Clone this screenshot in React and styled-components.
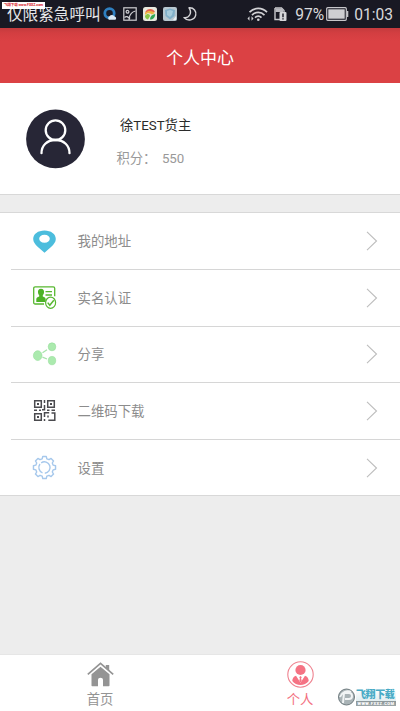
import React from "react";
import styled, { createGlobalStyle } from "styled-components";

const Global = createGlobalStyle`
  * { box-sizing: border-box; }
  body { margin: 0; background: #ededed; font-family: Roboto, "Noto Sans CJK SC", sans-serif; }
  svg { display: block; flex: none; overflow: visible; }
`;

const Screen = styled.div`
  width: 400px;
  height: 711px;
  display: flex;
  flex-direction: column;
  background: #ededed;
  overflow: hidden;
  position: relative;
`;

const StatusBar = styled.header`
  height: 28px;
  flex: none;
  display: flex;
  align-items: center;
  padding: 0 7px 0 7px;
  background: #191923;
  color: #d9d9dc;
`;

const Carrier = styled.span`
  width: 96px;
  padding-top: 2px;
  font-size: 15.6px;
  line-height: 28px;
  white-space: nowrap;
  color: #e6e6e8;
`;

const NoticeIcons = styled.div`
  display: flex;
  gap: 6px;
  flex: 1;
`;

const StatusText = styled.span`
  font-size: 15.6px;
  line-height: 28px;
  margin-left: ${(p) => p.$left}px;
  padding-top: 1px;
`;

const SimWrap = styled.div`
  margin-left: 6px;
`;

const BatteryWrap = styled.div`
  margin-left: 2px;
`;

const SourceTag = styled.div`
  position: absolute;
  left: 2px;
  top: 2px;
  width: 43px;
  height: 7px;
  background: #fff;
  color: #d8222a;
  font-weight: 700;
  white-space: nowrap;
`;

const SourceText = styled.span`
  display: block;
  width: 107px;
  font-size: 9px;
  line-height: 17px;
  letter-spacing: -0.2px;
  text-align: center;
  transform: scale(0.4);
  transform-origin: 0 0;
`;

const TitleBar = styled.div`
  height: 55px;
  flex: none;
  display: flex;
  align-items: center;
  justify-content: center;
  padding-top: 1px;
  background: linear-gradient(#c43a3d 0, #d33e41 5px, #db4144 13px);
  color: #fff;
  font-size: 17px;
`;

const Profile = styled.section`
  height: 112px;
  flex: none;
  display: flex;
  background: #fff;
  border-bottom: 1px solid #d8d8d8;
  padding: 26px 0 0 26px;
`;

const ProfileInfo = styled.div`
  display: flex;
  flex-direction: column;
  padding: 7px 0 0 31.500px;
`;

const UserName = styled.div`
  font-size: 13.3px;
  line-height: 20px;
  padding-left: 3.500px;
  color: #2b2b2b;
`;

const Points = styled.div`
  display: flex;
  gap: 5.500px;
  margin-top: 13px;
  font-size: 13.3px;
  line-height: 20px;
  color: #999;
`;

const Menu = styled.ul`
  list-style: none;
  margin: 17px 0 0;
  padding: 0;
  flex: none;
  background: #fff;
  border-top: 1px solid #d8d8d8;
  border-bottom: 1px solid #d8d8d8;
`;

const MenuRow = styled.li`
  height: 56.6px;
  margin-left: 11px;
  display: flex;
  align-items: center;
  padding: 0 22px 0 22px;
  &:first-child { height: 56px; }
  & + & { border-top: 1px solid #d6d6d6; }
`;

const MenuLabel = styled.span`
  flex: 1;
  margin-left: 21.500px;
  padding-top: 2px;
  font-size: 13.4px;
  line-height: 20px;
  color: #8c8c8c;
`;

const TabBar = styled.nav`
  height: 57px;
  flex: none;
  margin-top: auto;
  display: flex;
  background: #fff;
  border-top: 1px solid #e6e6e6;
`;

const Tab = styled.div`
  flex: 1;
  display: flex;
  flex-direction: column;
  align-items: center;
  padding-top: 6px;
  gap: 2px;
  font-size: 13.3px;
  line-height: 20px;
  color: ${(p) => (p.$active ? "#f36f80" : "#949494")};
`;

const Watermark = styled.div`
  position: absolute;
  left: 338px;
  top: 688px;
  display: flex;
  align-items: center;
`;

const WatermarkText = styled.div`
  margin-left: 1px;
  width: 40px;
  height: 17px;
  background: linear-gradient(#fff 0, #e2eef1 68%, #8b9699 69%, #9ca5a7 100%);
  color: #48abc6;
  font-size: 10px;
  line-height: 12px;
  font-weight: 900;
  letter-spacing: -0.4px;
  white-space: nowrap;
`;

const WatermarkUrl = styled.span`
  display: block;
  width: 80px;
  font-size: 8px;
  line-height: 10px;
  letter-spacing: 1px;
  color: #fff;
  text-align: center;
  transform: scale(0.5);
  transform-origin: 0 0;
`;

const BrowserIcon = () => (
  <svg width="14" height="14" viewBox="0 0 14 14">
    <circle cx="6.5" cy="6.3" r="4.7" fill="none" stroke="#2e7fc0" strokeWidth="2.8" />
    <path d="M6 12.8a2 2 0 0 1 .5-3.5 3 3 0 0 1 5.1.1 1.8 1.8 0 0 1 .5 3.4z" fill="#dceaf4" />
  </svg>
);

const PictureIcon = () => (
  <svg width="14" height="14" viewBox="0 0 14 14" fill="none" stroke="#cfcfd3" strokeWidth="1.2">
    <rect x=".8" y=".8" width="12.4" height="12.4" />
    <circle cx="4.5" cy="4.8" r="1.4" />
    <path d="M1.5 10.5c2-2 3.500-.4 4.500.6C7 6.800 9 4.800 12.500 4M6 13c.2-1 .3-1.300 1-2.500" />
  </svg>
);

const ColorfulIcon = () => (
  <svg width="14" height="14" viewBox="0 0 14 14">
    <rect width="14" height="14" rx="2.500" fill="#e8e9df" />
    <path d="M2 5.500C4 1 10 1 12 5L7 6z" fill="#e6624d" />
    <path d="M2 6c3-3 7-2.500 10 0L9 7.500C6 5.500 4 6 2 8z" fill="#eeb844" />
    <path d="M2 9c2-3 5-2 5 0L5 12.500C3 12 2 11 2 9z" fill="#8ac646" />
    <path d="M7 12.500c0-3 2-5 5.200-5.500 0 3.500-2 5.500-5.200 5.500z" fill="#30a653" />
  </svg>
);

const CleanerIcon = () => (
  <svg width="14" height="14" viewBox="0 0 14 14">
    <rect width="14" height="14" rx="2" fill="#b8c7d0" />
    <path d="M2 3l5-1.500L12 3l-.5 6L7 12.500 2.500 9z" fill="#82b1cb" />
    <path d="M4 4l3-1 3 1-1 4-2 2-3-2z" fill="#a8ccdd" />
    <path d="M10 13l3-4v4z" fill="#eef2f4" />
  </svg>
);

const MoonIcon = () => (
  <svg width="14" height="14" viewBox="0 0 14 14">
    <path d="M6 .8c5-.4 7.600 3.800 6.700 7.400-1.200 5-8 6.600-11.700 2.400C6 11.500 9.500 6 6 .8z" fill="none" stroke="#d4d4d7" strokeWidth="1.400" strokeLinejoin="round" />
  </svg>
);

const WifiIcon = () => (
  <svg width="20" height="15" viewBox="0 0 20 15" fill="none" stroke="#d2d2d5" strokeWidth="1.700">
    <path d="M1.500 5.200c5-5 12.500-5 17.500 0M4 8.100c3.600-3.600 9-3.600 12.500 0M7 10.700c2-2 4.600-2 6.500 0" />
    <circle cx="10.300" cy="12.700" r="1.300" fill="#d2d2d5" stroke="none" />
    <path d="M-.5 11.500l2-2.200v4.400zM5.500 11.500l-2-2.200v4.400z" fill="#d2d2d5" stroke="none" />
  </svg>
);

const SimIcon = () => (
  <svg width="13" height="14" viewBox="0 0 13 14">
    <path d="M1 1h6.500L10 3.500v2M6 12.500H1V1" fill="none" stroke="#c9c9cd" strokeWidth="1.400" />
    <path d="M1.500 1.500h6L9 3v2H1.500z" fill="#bcbcc1" />
    <rect x="5.500" y="5" width="7" height="9" rx="1" fill="#d6d6d9" />
    <path d="M9 6.500v3.700M9 11.300v1.300" stroke="#191923" strokeWidth="1.400" />
  </svg>
);

const BatteryIcon = () => (
  <svg width="23" height="14" viewBox="0 0 23 14">
    <rect x=".7" y=".7" width="19.600" height="12.600" rx="1" fill="none" stroke="#c6c6ca" strokeWidth="1.200" />
    <rect x="2.300" y="2.300" width="16.400" height="9.400" fill="#cfcfd2" />
    <path d="M21.500 4v6" stroke="#c6c6ca" strokeWidth="1.600" />
  </svg>
);

const Avatar = () => (
  <svg width="59" height="60" viewBox="0 0 59 60">
    <circle cx="29.500" cy="29.900" r="29.400" fill="#272636" />
    <g fill="none" stroke="#fff" strokeWidth="2.300" strokeLinecap="round">
      <circle cx="29.500" cy="21.200" r="9.800" />
      <path d="M15.500 44.200c0-7.500 5.500-13.200 14-13.200s14 5.700 14 13.200" />
    </g>
  </svg>
);

const PinIcon = () => (
  <svg width="23" height="23" viewBox="0 0 23 23">
    <path fillRule="evenodd" fill="#4cbddd" d="M11.500.5C5 .5.200 4 .200 9c0 3 2 5.300 4.400 7.700l6.900 6 6.800-6c2.500-2.400 4.500-4.700 4.500-7.700 0-5-4.800-8.500-11.300-8.500zm0 4.200c3.300 0 5.300 1.700 5.300 4s-2 4-5.300 4-5.300-1.700-5.300-4 2-4 5.300-4z" />
  </svg>
);

const IdIcon = () => (
  <svg width="23" height="23" viewBox="0 0 23 23" fill="none" stroke="#58b831" strokeWidth="1.300">
    <path d="M11 18H2.200Q.7 18 .7 16.500V2.300Q.7.800 2.200.800h18Q21.700.800 21.700 2.300v8" />
    <path d="M8 2.800c2.400 0 3.300 1.800 3 3.800-.2 1.400-.8 2.200-1.200 2.700v1.300c1.700.6 2.900 1.300 2.900 2.700v2.700H3.300v-2.700c0-1.400 1.200-2.100 2.900-2.700V9.300c-.5-.5-1-1.300-1.200-2.700C4.700 4.600 5.600 2.800 8 2.800z" fill="#4db327" stroke="none" />
    <path d="M12.500 5.700H19M12.500 9H19" />
    <ellipse cx="17.600" cy="16.700" rx="5" ry="5.600" fill="#fff" strokeWidth="1.200" />
    <path d="M14.700 16.600l2.100 2.700 4-5" strokeWidth="1.500" />
  </svg>
);

const ShareIcon = () => (
  <svg width="23" height="23" viewBox="0 0 23 23">
    <path d="M9.500 9.700l4.500-3M9.500 14.200l4.500 1.800" stroke="#a7e4ab" strokeWidth="1.300" />
    <g fill="#abeaae" stroke="#96dd9b" strokeWidth=".6">
      <ellipse cx="4.700" cy="12.600" rx="4.300" ry="4.900" />
      <ellipse cx="19" cy="3.800" rx="3.800" ry="4" />
      <ellipse cx="19" cy="17.600" rx="3.700" ry="4.200" />
    </g>
  </svg>
);

const QrIcon = () => (
  <svg width="23" height="23" viewBox="0 0 23 23" fill="none" stroke="#4a4a4e" strokeWidth="1.500">
    <path d="M1.700 1.700h6.600v6.600H1.700zM14.700 1.700h6.600v6.600h-6.600zM1.700 14.700h6.600v6.600H1.700z" />
    <path d="M4 4h2v2H4zM17 4h2v2h-2zM4 17h2v2H4z" fill="#4a4a4e" stroke="none" />
    <path d="M11.500 1v3M11.500 6v4.700H9M1 11.200h3M6 11.200h2M14 11.200h2.500M18.500 11.200H22M11.500 18v-4.200h4.700M18.500 14h3.300v7.300h-6.500M11.500 20v2M15 16.500v2" />
  </svg>
);

const gearPath = (() => {
  const points = [];
  for (let i = 0; i < 8; i++) {
    [[-15, 9], [-9, 11.2], [9, 11.2], [15, 9]].forEach(([offset, radius]) => {
      const angle = ((i * 45 + offset) * Math.PI) / 180;
      points.push(`${(11.5 + radius * Math.sin(angle)).toFixed(2)} ${(11.5 - radius * Math.cos(angle)).toFixed(2)}`);
    });
  }
  return `M${points.join("L")}Z`;
})();

const GearIcon = () => (
  <svg width="23" height="23" viewBox="0 0 23 23" fill="none" stroke="#a6c8ec" strokeWidth="1.400" strokeLinejoin="round">
    <path d={gearPath} />
    <path d="M9.500 16.800A5.700 5.700 0 0 1 7 8M8.200 6.800A5.700 5.700 0 1 1 11.800 17.200" />
  </svg>
);

const Chevron = () => (
  <svg width="12" height="20" viewBox="0 0 12 20">
    <path d="M1 .8L10.500 10 1 19.200" fill="none" stroke="#bdbdbd" strokeWidth="1.100" />
  </svg>
);

const HomeIcon = () => (
  <svg width="27" height="27" viewBox="0 0 27 27">
    <path d="M.8 13.300L13.500 2.300l12.700 11" fill="none" stroke="#949494" strokeWidth="1.700" />
    <path d="M18.800 4h3.400v6l-3.400-3zM13.500 5.700L22.500 13.300v11.200q0 .8-.8.800H16v-6.600q0-1.900-2.500-1.900T11 18.700v6.600H5.300q-.8 0-.8-.8V13.300z" fill="#949494" />
  </svg>
);

const PersonIcon = () => (
  <svg width="27" height="27" viewBox="0 0 27 27">
    <circle cx="13.500" cy="13.500" r="12.700" fill="none" stroke="#ef8390" strokeWidth="1.100" />
    <circle cx="13.500" cy="9" r="5.100" fill="#f57384" />
    <path d="M9 14.800l4.500 7 4.500-7c2.500.8 3.700 3 3.700 5.300-2 2.700-5 4-8.200 4s-6.200-1.300-8.200-4c0-2.300 1.200-4.500 3.700-5.300z" fill="#f57384" />
    <path d="M13.500 15l1.300 1.200-.7 1 .6 2.800-1.200 1.500-1.200-1.500.6-2.800-.7-1z" fill="#f57384" />
  </svg>
);

const BadgeIcon = () => (
  <svg width="17" height="18" viewBox="0 0 17 18">
    <circle cx="8.500" cy="9" r="8" fill="#a9b3b6" stroke="#707c80" />
    <path d="M5 15l1-10h5a3 3 0 0 1 0 6H7M2 9c2-5 7-7 11-5" fill="none" stroke="#f1f4f5" strokeWidth="2" />
  </svg>
);

const menuItems = [
  { label: "我的地址", Icon: PinIcon },
  { label: "实名认证", Icon: IdIcon },
  { label: "分享", Icon: ShareIcon },
  { label: "二维码下载", Icon: QrIcon },
  { label: "设置", Icon: GearIcon },
];

export default function App() {
  return (
    <Screen>
      <Global />
      <StatusBar>
        <Carrier>仅限紧急呼叫</Carrier>
        <NoticeIcons>
          <BrowserIcon />
          <PictureIcon />
          <ColorfulIcon />
          <CleanerIcon />
          <MoonIcon />
        </NoticeIcons>
        <WifiIcon />
        <SimWrap><SimIcon /></SimWrap>
        <StatusText $left={8}>97%</StatusText>
        <BatteryWrap><BatteryIcon /></BatteryWrap>
        <StatusText $left={5}>01:03</StatusText>
      </StatusBar>
      <TitleBar>个人中心</TitleBar>
      <Profile>
        <Avatar />
        <ProfileInfo>
          <UserName>徐TEST货主</UserName>
          <Points><span>积分：</span><span>550</span></Points>
        </ProfileInfo>
      </Profile>
      <Menu>
        {menuItems.map(({ label, Icon }) => (
          <MenuRow key={label}>
            <Icon />
            <MenuLabel>{label}</MenuLabel>
            <Chevron />
          </MenuRow>
        ))}
      </Menu>
      <TabBar>
        <Tab><HomeIcon />首页</Tab>
        <Tab $active><PersonIcon />个人</Tab>
      </TabBar>
      <SourceTag><SourceText>飞翔下载 www.FXXZ.com</SourceText></SourceTag>
      <Watermark>
        <BadgeIcon />
        <WatermarkText>飞翔下载<WatermarkUrl>WWW.FXXZ.COM</WatermarkUrl></WatermarkText>
      </Watermark>
    </Screen>
  );
}
